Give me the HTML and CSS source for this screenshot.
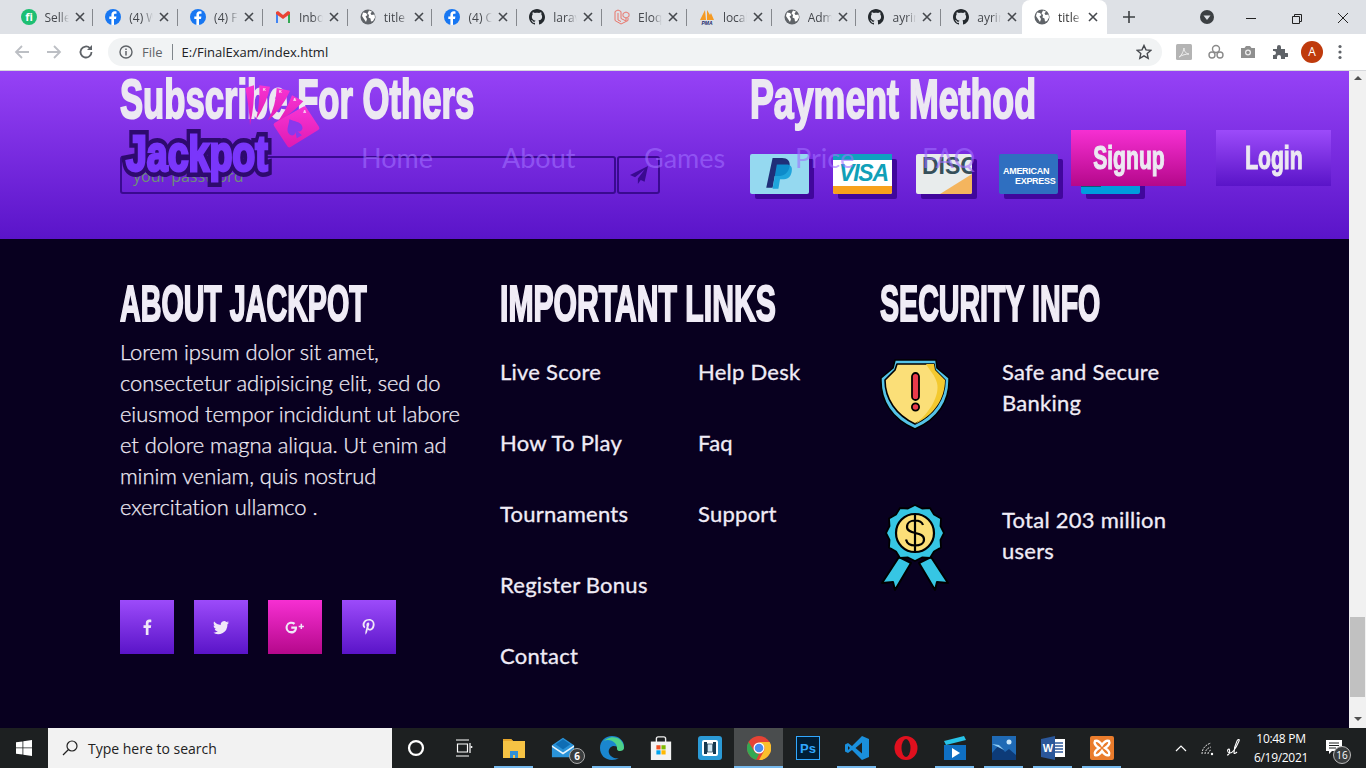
FILE: index.html
```html
<!DOCTYPE html>
<html lang="en">
<head>
<meta charset="utf-8">
<title>title</title>
<link rel="stylesheet" href="styles.css">
</head>
<body>
<svg class="defs" width="0" height="0" aria-hidden="true">
  <symbol id="globe" viewBox="0 0 16 16"><circle cx="8" cy="8" r="7.5" fill="#5f6368"/><path d="M3 3.500l3 .5 1.500 2-2 1.500L7 10l-1 3-2-3-2-3zM9 1.500l3 1-1.500 2 1 1.500 3-.5.500 3-2 3.500-2 .5-.5-3-2-1 .5-2.500-1.500-1.500z" fill="#fff"/></symbol>
  <symbol id="fb" viewBox="0 0 16 16"><circle cx="8" cy="8" r="8" fill="#1877f2"/><path d="M9 16V10h2l.4-2.500H9V6c0-.8.300-1.300 1.400-1.300h1.100V2.500C11 2.400 10.300 2.300 9.700 2.300 7.700 2.300 6.400 3.500 6.400 5.700v1.800H4.300V10h2.100v6z" fill="#fff"/></symbol>
  <symbol id="gh" viewBox="0 0 16 16"><path d="M8 0C3.600 0 0 3.600 0 8c0 3.500 2.300 6.500 5.500 7.600.4.100.5-.2.500-.4v-1.400c-2.200.5-2.700-1-2.700-1-.4-.9-.9-1.200-.9-1.200-.7-.5.100-.5.100-.5.800.1 1.200.8 1.200.8.700 1.200 1.900.9 2.300.7.100-.5.300-.9.500-1.100-1.800-.2-3.600-.9-3.600-4 0-.9.300-1.600.8-2.100-.1-.2-.4-1 .1-2.100 0 0 .7-.2 2.200.8.600-.2 1.300-.3 2-.3s1.400.1 2 .3c1.500-1 2.200-.8 2.200-.8.400 1.100.2 1.900.1 2.100.5.600.8 1.300.8 2.100 0 3.100-1.900 3.700-3.700 3.900.3.300.6.800.6 1.500v2.200c0 .2.100.5.600.4C13.700 14.500 16 11.500 16 8c0-4.400-3.600-8-8-8z" fill="#24292e"/></symbol>
  <symbol id="x" viewBox="0 0 10 10"><path d="M1 1l8 8M9 1l-8 8" stroke="#45484d" stroke-width="1.600" fill="none"/></symbol>
  <linearGradient id="pinkfan" x1="0" y1="0" x2="0" y2="1"><stop offset="0" stop-color="#f733d2"/><stop offset="1" stop-color="#e01cb4"/></linearGradient>
</svg>

<header class="tabstrip">
  <div class="tab"><svg class="tab-ico" viewBox="0 0 16 16"><circle cx="8" cy="8" r="8" fill="#1dbf73"/><text x="8" y="11.500" class="fi-text">fi</text></svg><span class="tab-title">Seller</span><svg class="tab-x"><use href="#x"/></svg></div>
  <div class="tab"><svg class="tab-ico"><use href="#fb"/></svg><span class="tab-title">(4) W</span><svg class="tab-x"><use href="#x"/></svg></div>
  <div class="tab"><svg class="tab-ico"><use href="#fb"/></svg><span class="tab-title">(4) F</span><svg class="tab-x"><use href="#x"/></svg></div>
  <div class="tab"><svg class="tab-ico" viewBox="0 0 16 16"><path d="M1 14V3l2 1v10z" fill="#4285f4"/><path d="M13 14V4l2-1v11z" fill="#34a853"/><path d="M1 3l2-1 5 4 5-4 2 1v2L8 10 1 5z" fill="#ea4335"/></svg><span class="tab-title">Inbox</span><svg class="tab-x"><use href="#x"/></svg></div>
  <div class="tab"><svg class="tab-ico"><use href="#globe"/></svg><span class="tab-title">title</span><svg class="tab-x"><use href="#x"/></svg></div>
  <div class="tab"><svg class="tab-ico"><use href="#fb"/></svg><span class="tab-title">(4) C</span><svg class="tab-x"><use href="#x"/></svg></div>
  <div class="tab"><svg class="tab-ico"><use href="#gh"/></svg><span class="tab-title">larav</span><svg class="tab-x"><use href="#x"/></svg></div>
  <div class="tab"><svg class="tab-ico" viewBox="0 0 16 16"><path d="M1 2.500l3-1.500 3 1.500v7l5 2.500V9l-3-1.500V4.500l3-1.500 3 1.500v3L12 9M1 2.500v9L7 15l7-3.500V9M4 4v7l3 1.500" fill="none" stroke="#e8756b" stroke-width="1"/></svg><span class="tab-title">Eloq</span><svg class="tab-x"><use href="#x"/></svg></div>
  <div class="tab"><svg class="tab-ico" viewBox="0 0 16 16"><path d="M1 11L6 1l1 10zM8 11V1l3 5 1-2 3 7z" fill="#f59a23"/><text x="8" y="15.500" class="pma-text">PMA</text></svg><span class="tab-title">local</span><svg class="tab-x"><use href="#x"/></svg></div>
  <div class="tab"><svg class="tab-ico"><use href="#globe"/></svg><span class="tab-title">Adm</span><svg class="tab-x"><use href="#x"/></svg></div>
  <div class="tab"><svg class="tab-ico"><use href="#gh"/></svg><span class="tab-title">ayrin</span><svg class="tab-x"><use href="#x"/></svg></div>
  <div class="tab tab-last"><svg class="tab-ico"><use href="#gh"/></svg><span class="tab-title">ayrin</span><svg class="tab-x"><use href="#x"/></svg></div>
  <div class="tab tab-active"><svg class="tab-ico"><use href="#globe"/></svg><span class="tab-title">title</span><svg class="tab-x"><use href="#x"/></svg></div>
  <svg class="new-tab" viewBox="0 0 12 12"><path d="M6 0v12M0 6h12" stroke="#3c4043" stroke-width="1.600"/></svg>
  <div class="win-controls">
    <span class="profile-dot"><svg viewBox="0 0 14 14"><circle cx="7" cy="7" r="7" fill="#3c4043"/><path d="M3.500 5.500h7L7 10z" fill="#dee1e6"/></svg></span>
    <svg class="win-btn" viewBox="0 0 46 34"><path d="M18 18.500h10" stroke="#222"/></svg>
    <svg class="win-btn" viewBox="0 0 46 34"><path d="M18.500 16.500h7v7h-7zM20.500 16.500v-2h7v7h-2" fill="none" stroke="#222"/></svg>
    <svg class="win-btn" viewBox="0 0 46 34"><path d="M18 13l10 10M28 13L18 23" stroke="#222"/></svg>
  </div>
</header>

<nav class="toolbar">
  <svg class="tool-ico" viewBox="0 0 16 16"><path d="M15 8H2M8 2L2 8l6 6" fill="none" stroke="#bcbfc4" stroke-width="1.800"/></svg>
  <svg class="tool-ico" viewBox="0 0 16 16"><path d="M1 8h13M8 2l6 6-6 6" fill="none" stroke="#bcbfc4" stroke-width="1.800"/></svg>
  <svg class="tool-ico" viewBox="0 0 16 16"><path d="M13.500 8a5.500 5.500 0 1 1-1.600-3.900" fill="none" stroke="#5f6368" stroke-width="1.800"/><path d="M14 1v5H9z" fill="#5f6368"/></svg>
  <div class="omnibox">
    <svg class="info-ico" viewBox="0 0 14 14"><circle cx="7" cy="7" r="6" fill="none" stroke="#5f6368" stroke-width="1.400"/><path d="M7 6v4.500M7 3.500v1.500" stroke="#5f6368" stroke-width="1.500"/></svg>
    <span class="omni-file">File</span>
    <span class="omni-sep"></span>
    <span class="omni-url">E:/FinalExam/index.html</span>
    <svg class="star" viewBox="0 0 16 16"><path d="M8 1.500l2 4.400 4.800.5-3.600 3.200 1 4.700L8 11.900l-4.200 2.400 1-4.700L1.200 6.400 6 5.900z" fill="none" stroke="#45484d" stroke-width="1.400"/></svg>
  </div>
  <div class="ext-row">
    <svg class="ext" viewBox="0 0 16 16"><rect width="16" height="16" rx="1.500" fill="#b4b4b4"/><path d="M3 13c2-1 4-4 5-9 0 3 2 6 5 6-3 0-7 1-10 3z" fill="none" stroke="#eee" stroke-width="1"/></svg>
    <svg class="ext" viewBox="0 0 16 16"><g fill="none" stroke="#8a8a8a" stroke-width="1.400"><circle cx="4" cy="11" r="3"/><circle cx="12" cy="11" r="3"/><circle cx="8" cy="5" r="3.500"/></g></svg>
    <svg class="ext" viewBox="0 0 16 16"><path d="M1 4h3.500L6 2h4l1.500 2H15v10H1z" fill="#8f8f8f"/><circle cx="8" cy="8.500" r="3" fill="#eee"/><circle cx="8" cy="8.500" r="1.700" fill="#8f8f8f"/></svg>
    <svg class="ext" viewBox="0 0 16 16"><path d="M1 5h4V3a2 2 0 0 1 4 0v2h4v4h2a2 2 0 0 1 0 4h-2v2H9v-2a2 2 0 0 0-4 0v2H1v-4h1a2 2 0 0 0 0-4H1z" fill="#5f6368"/></svg>
    <span class="avatar">A</span>
    <svg class="kebab" viewBox="0 0 4 16"><g fill="#5f6368"><circle cx="2" cy="2.500" r="1.600"/><circle cx="2" cy="8" r="1.600"/><circle cx="2" cy="13.500" r="1.600"/></g></svg>
  </div>
</nav>

<div class="viewport">
  <div class="page">
    <header class="site-header">
      <div class="logo">
        <svg class="logo-cards" viewBox="0 0 270 225">
          <path d="M28 30L54 22Q56 80 42 142Q40 90 28 30Z" fill="url(#pinkfan)"/>
          <path d="M70 22L102 26Q95 70 60 125Q72 80 70 22Z" fill="url(#pinkfan)"/>
          <path d="M122 30L162 38Q140 90 95 128Q120 85 122 30Z" fill="url(#pinkfan)"/>
          <path d="M168 52L202 70Q175 100 118 140Q150 100 168 52Z" fill="url(#pinkfan)"/>
          <path d="M120 140L205 92L243 150L160 201Z" fill="url(#pinkfan)" stroke="url(#pinkfan)" stroke-width="14" stroke-linejoin="round"/>
          <path d="M175 120C185 135 200 142 198 157C196 170 182 170 178 162L184 180H166L172 162C168 170 154 170 152 157C150 142 165 135 175 120Z" transform="rotate(-30 175 150)" fill="#8a38ec"/>
          <text x="85" y="38" class="card-letter">K</text>
          <text x="133" y="44" class="card-letter">K</text>
          <text x="176" y="70" class="card-letter">A</text>
          <text x="206" y="104" class="card-letter">A</text>
        </svg>
        <span class="logo-word" data-text="Jackpot">Jackpot</span>
      </div>
      <ul class="site-nav">
        <li class="nav-home">Home</li>
        <li class="nav-about">About</li>
        <li class="nav-games">Games</li>
        <li class="nav-price">Price</li>
        <li class="nav-faq">FAQ</li>
      </ul>
      <div class="auth">
        <a class="auth-btn auth-pink"><span class="auth-label">Signup</span></a>
        <a class="auth-btn auth-purple"><span class="auth-label">Login</span></a>
      </div>
    </header>

    <section class="band">
      <div class="band-col band-sub">
        <h2 class="band-title">Subscribe For Others</h2>
        <form class="sub-form">
          <div class="sub-input">your password</div>
          <div class="sub-send"><svg viewBox="0 0 16 16"><path d="M16 0L0 8l4.500 2L13 3l-6 8v5l2.500-3.500 3.500 1.500z" fill="#3a0a90"/></svg></div>
        </form>
      </div>
      <div class="band-col band-pay">
        <h2 class="band-title band-title-pay">Payment Method</h2>
        <div class="cards">
          <div class="card card-paypal"><svg viewBox="0 0 30 34"><path d="M8 2h9c5 0 8 3 7 8-1 6-5 9-11 9H10l-2 11H2z" fill="#1f2f78"/><path d="M12 8h9c4 0 6 2 5 7-1 5-4 7-9 7h-2l-1.500 9H8z" fill="#0a9bd8" opacity=".85"/></svg></div>
          <div class="card card-visa"><span class="visa-top"></span><span class="visa-word">VISA</span><span class="visa-bot"></span></div>
          <div class="card card-disc"><span class="disc-word">DISC</span><span class="disc-corner"></span></div>
          <div class="card card-amex"><span class="amex-word">AMERICAN</span><span class="amex-word amex-second">EXPRESS</span></div>
          <div class="card card-fifth"></div>
        </div>
      </div>
    </section>

    <footer class="site-footer">
      <div class="foot-col">
        <h3 class="foot-title foot-title-about">ABOUT JACKPOT</h3>
        <p class="foot-about">Lorem ipsum dolor sit amet, consectetur adipisicing elit, sed do eiusmod tempor incididunt ut labore et dolore magna aliqua. Ut enim ad minim veniam, quis nostrud exercitation ullamco .</p>
        <div class="socials">
          <a class="social"><svg viewBox="0 0 16 16"><path d="M9.500 16V9h2.300l.4-2.800H9.500V4.500c0-.8.200-1.300 1.400-1.300h1.400V.7C12 .7 11.200.6 10.300.6 8.200.6 6.800 1.900 6.800 4.200v2H4.500V9h2.300v7z" fill="#f0e8f8"/></svg></a>
          <a class="social"><svg viewBox="0 0 16 16"><path d="M16 3.500c-.6.300-1.200.4-1.900.5.700-.4 1.200-1 1.400-1.800-.6.400-1.300.7-2.100.8A3.300 3.300 0 0 0 7.800 6C5.100 5.900 2.700 4.600 1.100 2.600.3 4 .7 6 2.100 7c-.5 0-1-.2-1.500-.4 0 1.600 1.100 3 2.600 3.300-.5.100-1 .1-1.500 0 .4 1.300 1.600 2.300 3.100 2.300A6.600 6.600 0 0 1 0 13.600 9.300 9.300 0 0 0 14.400 5.300c.6-.5 1.200-1.100 1.600-1.800z" fill="#f0e8f8"/></svg></a>
          <a class="social social-pink"><svg class="gplus" viewBox="0 0 22 16"><path d="M6.500 7v2.300h3.700c-.3 1.500-1.600 2.500-3.700 2.500a3.900 3.900 0 0 1 0-7.800c1 0 1.900.4 2.600 1l1.700-1.700A6.300 6.300 0 1 0 6.500 14.400c3.700 0 6.100-2.600 6.100-6.200 0-.4 0-.8-.1-1.200zM18 6V4h-1.600v2h-2v1.600h2v2H18v-2h2V6z" fill="#f0e8f8"/></svg></a>
          <a class="social"><svg viewBox="0 0 16 16"><path d="M8.200 0C3.800 0 1.600 3 1.600 5.600c0 1.600.6 3 1.900 3.500.2.100.4 0 .5-.2l.2-.8c.1-.2 0-.3-.1-.5-.4-.4-.6-1-.6-1.800 0-2.300 1.700-4.300 4.500-4.300 2.400 0 3.800 1.500 3.800 3.500 0 2.600-1.200 4.800-2.900 4.800-1 0-1.700-.8-1.400-1.800.3-1.100.8-2.300.8-3.100 0-.7-.4-1.300-1.200-1.300-.9 0-1.700 1-1.700 2.300 0 .8.300 1.400.3 1.400L4.500 12.300c-.3 1.300-.1 2.900 0 3.100 0 .1.100.1.200.1.100-.1 1.100-1.400 1.500-2.700l.6-2.300c.3.600 1.200 1.100 2.100 1.100 2.800 0 4.700-2.600 4.700-6C13.600 2.400 11.400 0 8.200 0z" fill="#f0e8f8"/></svg></a>
        </div>
      </div>
      <div class="foot-col">
        <h3 class="foot-title foot-title-links">IMPORTANT LINKS</h3>
        <div class="foot-links">
          <ul class="link-list link-list-a">
            <li>Live Score</li><li>How To Play</li><li>Tournaments</li><li>Register Bonus</li><li>Contact</li>
          </ul>
          <ul class="link-list">
            <li>Help Desk</li><li>Faq</li><li>Support</li>
          </ul>
        </div>
      </div>
      <div class="foot-col">
        <h3 class="foot-title foot-title-sec">SECURITY INFO</h3>
        <div class="sec-row sec-row-first">
          <svg class="sec-ico" viewBox="0 0 70 72">
            <path d="M15 1H56L57 9L69 19C70 42 58 60 35 70C12 60 0 42 1 19L13 9Z" fill="#55c3e8" stroke="#000" stroke-width="1.600" stroke-linejoin="round"/>
            <path d="M17 5H54L55 11L65 21C65 40 54 56 35 65C16 56 5 40 5 21L15 11Z" fill="#fbdf78" stroke="#000" stroke-width="1.600" stroke-linejoin="round"/>
            <path d="M46 5H54L55 11L65 21C65 40 54 56 35 65C50 54 60 36 57 24C55 16 50 12 46 5Z" fill="#f3c92f"/>
            <rect x="32" y="14" width="7" height="27" rx="3.500" fill="#ea3a4b" stroke="#000" stroke-width="1.800"/>
            <circle cx="35.500" cy="48" r="3.600" fill="#ea3a4b" stroke="#000" stroke-width="1.800"/>
          </svg>
          <p class="sec-text">Safe and Secure Banking</p>
        </div>
        <div class="sec-row">
          <svg class="sec-ico sec-ico-medal" viewBox="0 0 70 88">
            <path d="M19 53L2 79L13 78L15 86L31 59ZM51 53L68 79L57 78L55 86L39 59Z" fill="#36c6e4" stroke="#000" stroke-width="2" stroke-linejoin="round"/>
            <path d="M35 1l7 3.500 8-.5 4 6.500 7 4-.5 7.500 3.500 7-3.500 7 .5 7.500-7 4-4 6.500-8-.5-7 3.500-7-3.500-8 .5-4-6.500-7-4 .5-7.500-3.500-7 3.500-7-.5-7.500 7-4 4-6.500 8 .5z" fill="#36c6e4" stroke="#000" stroke-width="1.800" stroke-linejoin="round"/>
            <circle cx="35" cy="29" r="19" fill="#fbdf78" stroke="#000" stroke-width="2.200"/>
            <path d="M43 21c-1-3-4-4.500-8-4.500s-8 2-8 6.500c0 8 17 4 17 12.500 0 4-4 6-9 6s-8-2-9-6M35 11v36" fill="none" stroke="#000" stroke-width="2.200"/>
          </svg>
          <p class="sec-text">Total 203 million users</p>
        </div>
      </div>
    </footer>
  </div>
  <aside class="scrollbar">
    <span class="arrow-up"></span>
    <span class="thumb"></span>
    <span class="arrow-down"></span>
  </aside>
</div>

<footer class="taskbar">
  <div class="tb-start"><svg viewBox="0 0 16 16"><path d="M0 2.300L6.500 1.400V7.500H0zM7.300 1.300L16 0V7.500H7.300zM0 8.300H6.500V14.600L0 13.700zM7.300 8.300H16V16L7.300 14.700z" fill="#fff"/></svg></div>
  <div class="tb-search"><svg viewBox="0 0 16 16"><circle cx="10" cy="6" r="5" fill="none" stroke="#222" stroke-width="1.200"/><path d="M6.500 9.500L1 15" stroke="#222" stroke-width="1.300"/></svg><span>Type here to search</span></div>
  <div class="tb-cell"><svg class="tb-small" viewBox="0 0 16 16"><circle cx="8" cy="8" r="6.200" fill="none" stroke="#fff" stroke-width="2"/></svg></div>
  <div class="tb-cell"><svg class="tb-small" viewBox="0 0 18 18"><path d="M1 1h13M1 17h13M2.500 5h10v8h-10zM15 4v10" fill="none" stroke="#fff" stroke-width="1.200"/><circle cx="16.500" cy="8" r="1" fill="#fff"/></svg></div>

  <div class="tb-app tb-on"><svg viewBox="0 0 24 24"><path d="M1 3h8l2 2h12v17H1z" fill="#f6c344"/><path d="M1 3h8l2 2H1z" fill="#e6a52a"/><path d="M8 22v-7h8v7h-3v-3h-2v3z" fill="#2f8fd6"/></svg></div>
  <div class="tb-app"><svg viewBox="0 0 26 24"><path d="M1 9L13 1l12 8v13H1z" fill="#2a93d9"/><path d="M1 9l12 8 12-8v2L13 19 1 11z" fill="#e9f5fc"/><path d="M5 8l8-5.500L21 8l-8 5.500z" fill="#0f6db4"/></svg><span class="mail-badge">6</span></div>
  <div class="tb-app tb-on"><svg viewBox="0 0 24 24"><path d="M12 0C5 0 0 5 0 12c0 7 5 12 12 12 3 0 5-1 7-2-4 1-9-1-10-5-1-3 1-6 4-7 4 0 7 2 10 3 1-1 1-2 1-3C24 5 19 0 12 0z" fill="#1a86cf"/><path d="M2 7c3-4 9-7 15-5 4 1 7 6 7 10 0 2-2 3-4 3-3 0-3-2-3-3 0-5-5-8-9-8-3 0-5 1-6 3z" fill="#4ed28a"/></svg></div>
  <div class="tb-app"><svg viewBox="0 0 24 26"><path d="M7 8V3a2 2 0 0 1 2-2h6a2 2 0 0 1 2 2v5" fill="none" stroke="#eee" stroke-width="1.500"/><rect x="1" y="6" width="22" height="20" fill="#f3f3f3"/><rect x="7" y="10" width="4.500" height="4.500" fill="#f25022"/><rect x="12.500" y="10" width="4.500" height="4.500" fill="#7fba00"/><rect x="7" y="15.500" width="4.500" height="4.500" fill="#00a4ef"/><rect x="12.500" y="15.500" width="4.500" height="4.500" fill="#ffb900"/></svg></div>
  <div class="tb-app"><svg viewBox="0 0 24 24"><rect width="24" height="24" rx="3" fill="#2b9ad6"/><rect x="4" y="4" width="16" height="16" rx="2" fill="#fff"/><rect x="6" y="6" width="3" height="12" fill="#17384f"/><rect x="15" y="6" width="3" height="12" fill="#17384f"/><rect x="9.500" y="8" width="5" height="8" fill="#cfe6f2" stroke="#17384f" stroke-width=".7"/></svg></div>
  <div class="tb-app tb-active tb-on"><svg viewBox="0 0 24 24"><circle cx="12" cy="12" r="12" fill="#e54335"/><path d="M12 24A12 12 0 0 1 1.600 6L7 15c1 2 3 3 5 3l-3 6z" fill="#34a853"/><path d="M12 6h10.600A12 12 0 0 1 12 24l5-9c1-2 1-4-.5-6z" fill="#fbc02d"/><circle cx="12" cy="12" r="5.500" fill="#fff"/><circle cx="12" cy="12" r="4.300" fill="#4a8bf0"/></svg></div>
  <div class="tb-app"><svg viewBox="0 0 24 24"><rect x=".5" y=".5" width="23" height="23" fill="#001e36" stroke="#31a8ff"/><text x="12" y="17" class="ps-text">Ps</text></svg></div>
  <div class="tb-app tb-on"><svg viewBox="0 0 24 24"><path d="M17 0l7 3v18l-7 3L7 14l-4 3-3-1.500V8.500L3 7l4 3z" fill="#1a8fdc"/><path d="M17 6.500L10.500 12l6.500 5.500z" fill="#1d2021"/><path d="M3 10l2 2-2 2z" fill="#1d2021"/></svg></div>
  <div class="tb-app"><svg viewBox="0 0 24 24"><ellipse cx="12" cy="12" rx="11.500" ry="12" fill="#e0101e"/><ellipse cx="12" cy="12" rx="4.500" ry="9" fill="#1d2021"/></svg></div>
  <div class="tb-app tb-on"><svg viewBox="0 0 24 24"><path d="M1 9h22v15H1z" fill="#0f6fc2"/><path d="M1 5l20-5 2 4L3 9z" fill="#27c3e8"/><path d="M9 12l8 5-8 5z" fill="#fff"/></svg></div>
  <div class="tb-app tb-on"><svg viewBox="0 0 24 24"><rect width="24" height="24" fill="#1f6ab5"/><path d="M0 24v-7l7-8 6 7 4-3 7 6v5z" fill="#0d3b78"/><path d="M0 8l7 1 5 5" fill="#8ecdf5"/><circle cx="17" cy="6" r="2.500" fill="#cbe8fb"/></svg></div>
  <div class="tb-app tb-on"><svg viewBox="0 0 24 24"><path d="M9 3h15v18H9z" fill="#fff"/><path d="M14 7h8M14 10h8M14 13h8M14 16h8" stroke="#2b579a" stroke-width="1.400"/><path d="M0 3l14-3v24L0 21z" fill="#2b579a"/><text x="7" y="16" class="word-text">W</text></svg></div>
  <div class="tb-app tb-on"><svg viewBox="0 0 24 24"><rect width="24" height="24" rx="2" fill="#ea7c2c"/><path d="M5 5c3-1 5 1 7 4 2-3 4-5 7-4 1 2-1 5-4 7 3 2 5 5 4 7-3 1-5-1-7-4-2 3-4 5-7 4-1-2 1-5 4-7-3-2-5-5-4-7z" fill="none" stroke="#fff" stroke-width="2.400"/></svg></div>

  <div class="tray">
    <svg class="tray-ico" viewBox="0 0 12 8"><path d="M1 7l5-5 5 5" fill="none" stroke="#fff" stroke-width="1.200"/></svg>
    <svg class="tray-wifi" viewBox="0 0 16 16"><path d="M2 14C2 9 5 5 11 3M5 14c0-3 2-6 6-7M8 14c0-2 1-3 3-4" fill="none" stroke="#ddd" stroke-width="1" stroke-dasharray="2 1"/><circle cx="12" cy="14" r="1.200" fill="#fff"/></svg>
    <svg class="tray-pen" viewBox="0 0 16 18"><path d="M1 16c3 0 3-5 2-6-2 0-2 4 1 4s6-5 9-12c1-2-1-2-2 0-2 4-3 8-3 12 0 1 2 0 3-1" fill="none" stroke="#fff" stroke-width="1.100"/></svg>
    <div class="clock"><span>10:48 PM</span><span>6/19/2021</span></div>
    <div class="notify"><svg viewBox="0 0 16 16"><path d="M0 1h16v11H6l-3 3v-3H0z" fill="#fff"/><path d="M3 4h10M3 6.500h10M3 9h7" stroke="#1d2021"/></svg><span class="notify-badge">16</span></div>
  </div>
</footer>
</body>
</html>
```

FILE: styles.css
```css
* { box-sizing: border-box; }
html, body { margin: 0; padding: 0; }
body {
  width: 1366px;
  height: 768px;
  overflow: hidden;
  display: flex;
  flex-direction: column;
  font-family: "Open Sans", "Liberation Sans", sans-serif;
  background: #fff;
}
ul { list-style: none; margin: 0; padding: 0; }
p, h2, h3 { margin: 0; }
.defs { position: absolute; }

/* browser chrome */
.tabstrip {
  height: 34px;
  flex: none;
  background: #dee1e6;
  display: flex;
  align-items: center;
  padding-left: 8.5px;
  font-size: 12px;
  color: #45484d;
}
.tab {
  width: 84.8px;
  height: 34px;
  flex: none;
  display: flex;
  align-items: center;
  padding: 0 8px 0 12px;
  position: relative;
}
.tab::after {
  content: "";
  position: absolute;
  right: 0;
  top: 9px;
  height: 17px;
  width: 1px;
  background: #85888d;
}
.tab-last::after, .tab-active::after { display: none; }
.tab-active {
  background: #fff;
  border-radius: 8px 8px 0 0;
  color: #333;
  margin-left: -4px;
}
.tab-ico { width: 16px; height: 16px; flex: none; }
.tab-title {
  width: 24px;
  margin-left: 8px;
  overflow: hidden;
  white-space: nowrap;
  -webkit-mask-image: linear-gradient(90deg, #000 60%, transparent);
  mask-image: linear-gradient(90deg, #000 60%, transparent);
}
.tab-x { width: 10px; height: 10px; margin-left: 6px; flex: none; }
.fi-text { font: 700 11px "Open Sans", sans-serif; fill: #fff; text-anchor: middle; }
.pma-text { font: italic 700 5px "Liberation Sans", sans-serif; fill: #1a2a6c; text-anchor: middle; }
.new-tab { width: 12px; height: 12px; margin-left: 16px; flex: none; }
.win-controls { display: flex; align-items: center; margin-left: auto; }
.profile-dot { width: 14px; height: 14px; margin-right: 14px; display: block; }
.profile-dot svg { display: block; }
.win-btn { width: 46px; height: 34px; display: block; }

.toolbar {
  height: 37px;
  flex: none;
  background: #fff;
  display: flex;
  align-items: center;
  padding: 0 0 1px 14px;
  gap: 16px;
  border-bottom: 1px solid #d6d8dc;
}
.tool-ico { width: 16px; height: 16px; flex: none; }
.omnibox {
  margin-left: -2px;
  width: 1054px;
  height: 28px;
  border-radius: 14px;
  background: #f1f3f4;
  display: flex;
  align-items: center;
  padding: 0 10px 0 11px;
  font-size: 13px;
}
.info-ico { width: 14px; height: 14px; }
.omni-file { margin-left: 9px; color: #5f6368; }
.omni-sep { width: 1px; height: 16px; background: #80868b; margin: 0 9px 0 9px; }
.omni-url { color: #202124; }
.star { width: 16px; height: 16px; margin-left: auto; }
.ext-row { display: flex; align-items: center; margin-left: -2px; gap: 16px; }
.ext { width: 16px; height: 16px; display: block; }
.avatar {
  width: 22px;
  height: 22px;
  border-radius: 50%;
  background: #bf3a0c;
  color: #fff;
  font-size: 12px;
  text-align: center;
  line-height: 22px;
  margin-left: -3px;
}
.kebab { width: 4px; height: 16px; margin-left: -1px; }

/* page */
.viewport {
  flex: 1;
  min-height: 0;
  display: flex;
}
.page {
  flex: 1;
  min-width: 0;
  position: relative;
  overflow: hidden;
  display: flex;
  flex-direction: column;
  background: #08001f;
}
.scrollbar {
  width: 17px;
  flex: none;
  background: #f1f1f1;
  display: flex;
  flex-direction: column;
  align-items: center;
  padding-top: 5px;
}
.arrow-up { border: 4px solid transparent; border-top: 0; border-bottom: 4px solid #505050; }
.thumb { width: 15px; height: 80px; background: #c1c1c1; margin-top: 537px; }
.arrow-down { border: 4px solid transparent; border-bottom: 0; border-top: 4px solid #505050; margin-top: 20px; }

.band {
  height: 168px;
  flex: none;
  background: linear-gradient(180deg, #9642f6 0%, #5a14c9 100%);
  display: flex;
  padding-left: 120px;
}
.band-col { padding-top: 0; }
.band-sub { width: 630px; }
.band-title {
  font-family: "Liberation Sans", sans-serif;
  font-weight: 700;
  font-size: 55px;
  line-height: 56px;
  color: #ece8f2;
  -webkit-text-stroke: 2px #ece8f2;
  white-space: nowrap;
  width: max-content;
  transform: scaleX(.63);
  transform-origin: left center;
}
.band-title-pay { transform: scaleX(.65); }
.sub-form { display: flex; margin-top: 29px; gap: 1px; }
.sub-input {
  width: 496px;
  height: 38px;
  border: 2px solid #3a0a90;
  border-radius: 3px;
  padding: 5px 11px;
  font-size: 16px;
  line-height: 26px;
  color: #6c8f7a;
}
.sub-send {
  width: 43px;
  height: 38px;
  border: 2px solid #3a0a90;
  border-radius: 3px;
  display: flex;
  align-items: center;
  justify-content: center;
}
.sub-send svg { width: 18px; height: 18px; }
.cards { display: flex; margin-top: 27px; gap: 24px; }
.card {
  width: 59px;
  height: 40px;
  border-radius: 2px;
  box-shadow: 5px 5px 0 #41079c;
  flex: none;
  position: relative;
}
.card-paypal { background: #95d9f0; display: flex; align-items: center; justify-content: center; }
.card-paypal svg { width: 32px; height: 36px; }
.card-visa { background: #fff; }
.visa-top { position: absolute; left: 0; top: 0; right: 0; height: 6px; background: #10a0c0; }
.visa-bot { position: absolute; left: 0; bottom: 0; right: 0; height: 8px; background: #f8a11c; border-radius: 0 0 2px 2px; }
.visa-word {
  position: absolute; left: 6px; top: 6px;
  font: italic 700 23px/26px "Liberation Sans", sans-serif;
  color: #10a0b8;
  letter-spacing: -1.200px;
}
.card-disc { background: #e8ecec; width: 56px; margin-right: 3px; overflow: hidden; }
.disc-word {
  position: absolute; left: 6px; top: -2px;
  font: 700 23px/28px "Liberation Sans", sans-serif;
  color: #36505a;
}
.disc-corner {
  position: absolute; right: 0; bottom: 0;
  width: 0; height: 0;
  border-left: 32px solid transparent;
  border-bottom: 20px solid #f4b55e;
}
.card-amex { background: #2f6fc0; }
.amex-word {
  position: absolute; left: 4px; top: 13px;
  font: 700 9px/9px "Liberation Sans", sans-serif;
  color: #fff;
  letter-spacing: -.3px;
}
.amex-second { left: 16px; top: 23px; }
.card-fifth { background: #009cde; margin-left: -1px; }
.card-fifth::before {
  content: "";
  position: absolute;
  left: 0;
  top: 32px;
  width: 20px;
  height: 1px;
  background: #0b5a78;
}

/* fixed header overlay */
.site-header {
  position: absolute;
  left: 0;
  right: 0;
  top: 0;
  height: 130px;
  z-index: 2;
}
.logo { position: absolute; left: 120px; top: 7px; width: 206px; height: 104px; }
.logo-cards { position: absolute; left: 116px; top: 0; width: 90px; height: 75px; }
.card-letter { font: 700 12px "Liberation Sans", sans-serif; fill: #fbe6f6; text-anchor: middle; }
.logo-word {
  position: absolute;
  left: 6px;
  top: 47px;
  font-family: "Liberation Sans", sans-serif;
  font-weight: 700;
  font-size: 50px;
  line-height: 58px;
  color: #6f2cf5;
  -webkit-text-stroke: 12px #2e0a6e;
  paint-order: stroke fill;
  white-space: nowrap;
  transform: scaleX(.75);
  transform-origin: left center;
}
.logo-word::after {
  content: attr(data-text);
  position: absolute;
  left: 0;
  top: 0;
  color: #7a36fb;
  -webkit-text-stroke: 3px #7a36fb;
}
.site-nav {
  font-family: "Lato", sans-serif;
  font-size: 27px;
  line-height: 32px;
  color: rgba(160, 110, 255, .62);
}
.site-nav li { position: absolute; top: 71px; }
.nav-home { left: 361px; }
.nav-about { left: 502px; }
.nav-games { left: 644px; }
.nav-price { left: 795px; }
.nav-faq { left: 922px; }
.auth { position: absolute; left: 1071px; top: 59px; display: flex; gap: 30px; }
.auth-btn {
  width: 115px;
  height: 56px;
  display: flex;
  align-items: center;
  justify-content: center;
  font-family: "Liberation Sans", sans-serif;
  font-weight: 700;
  font-size: 33px;
  color: #ece8f2;
  -webkit-text-stroke: 1.200px #ece8f2;
}
.auth-label { display: block; transform: scaleX(.64); flex: none; }
.auth-pink { background: linear-gradient(180deg, #f62fd2, #b5088b); }
.auth-purple { background: linear-gradient(180deg, #9c4bfa, #5a14c8); }

/* footer */
.site-footer {
  flex: 1;
  padding: 35px 0 0 120px;
  display: flex;
  color: #f0ecf6;
  font-family: "Lato", sans-serif;
  font-size: 22px;
  line-height: 31px;
}
.foot-col { width: 380px; flex: none; }
.foot-title {
  font-family: "Liberation Sans", sans-serif;
  font-weight: 700;
  font-size: 50px;
  line-height: 60px;
  white-space: nowrap;
  -webkit-text-stroke: 2px #f0ecf6;
  color: #f0ecf6;
  width: max-content;
  transform-origin: left center;
}
.foot-title-about { transform: scaleX(.573); }
.foot-title-links { transform: scaleX(.603); }
.foot-title-sec { transform: scaleX(.572); }
.foot-about {
  width: 350px;
  margin-top: 2px;
  font-weight: 300;
  letter-spacing: -.1px;
  -webkit-text-stroke: .25px #f0ecf6;
}
.socials { display: flex; gap: 20px; margin-top: 78px; }
.social {
  width: 54px;
  height: 54px;
  background: linear-gradient(180deg, #9c4bfa, #5a14c8);
  display: flex;
  align-items: center;
  justify-content: center;
}
.social svg { width: 16px; height: 16px; }
.social .gplus { width: 21px; height: 15px; }
.social-pink { background: linear-gradient(180deg, #f62fd2, #b5088b); }
.foot-links { display: flex; margin-top: 22px; -webkit-text-stroke: .3px #f0ecf6; letter-spacing: .25px; }
.link-list-a { width: 198px; }
.link-list li { margin-bottom: 40px; white-space: nowrap; }
.sec-row { display: flex; }
.sec-row-first { margin-top: 22px; height: 148px; }
.sec-ico { width: 70px; height: 72px; flex: none; margin-top: 3px; }
.sec-ico-medal { height: 88px; margin-top: 0; }
.sec-text { margin-left: 52px; width: 190px; -webkit-text-stroke: .3px #f0ecf6; letter-spacing: .25px; }

/* taskbar */
.taskbar {
  height: 40px;
  flex: none;
  background: #1d2021;
  display: flex;
  align-items: stretch;
}
.tb-start { width: 48px; display: flex; align-items: center; justify-content: center; }
.tb-start svg { width: 16px; height: 16px; }
.tb-search {
  width: 344px;
  background: #f2f2f2;
  display: flex;
  align-items: center;
  padding-left: 14px;
  font-family: "Open Sans", sans-serif;
  font-size: 14px;
  color: #222;
}
.tb-search svg { width: 16px; height: 16px; margin-right: 10px; }
.tb-cell { width: 48px; display: flex; align-items: center; justify-content: center; }
.tb-small { width: 18px; height: 18px; }
.tb-app {
  width: 49px;
  position: relative;
  display: flex;
  align-items: center;
  justify-content: center;
  flex: none;
}
.tb-app:nth-child(5) { margin-left: 1px; }
.tb-app svg { width: 24px; height: 24px; }
.tb-on::after {
  content: "";
  position: absolute;
  left: 5px;
  right: 5px;
  bottom: 0;
  height: 2px;
  background: #76b9ed;
}
.tb-active { background: #4a4d4e; }
.tb-active::after { left: 0; right: 0; }
.ps-text { font: 700 13px "Liberation Sans", sans-serif; fill: #31a8ff; text-anchor: middle; }
.word-text { font: 700 11px "Liberation Sans", sans-serif; fill: #fff; text-anchor: middle; }
.mail-badge {
  position: absolute;
  left: 31px;
  top: 20px;
  width: 16px;
  height: 16px;
  border-radius: 50%;
  background: #3a3d3e;
  border: 1px solid #aaa;
  color: #fff;
  font: 700 10px/14px "Open Sans", sans-serif;
  text-align: center;
}
.tray { margin-left: auto; display: flex; align-items: center; color: #fff; }
.tray-ico { width: 12px; height: 8px; margin-right: 13px; }
.tray-wifi { width: 16px; height: 16px; margin-right: 10px; }
.tray-pen { width: 16px; height: 18px; margin-right: 11px; }
.clock {
  display: flex;
  flex-direction: column;
  align-items: center;
  font-size: 12px;
  line-height: 19px;
  width: 56px;
  letter-spacing: -.3px;
}
.notify { width: 52px; height: 40px; position: relative; margin-left: 5px; }
.notify svg { position: absolute; left: 12px; top: 11px; width: 16px; height: 16px; }
.notify-badge {
  position: absolute;
  left: 19px;
  top: 18px;
  width: 18px;
  height: 18px;
  border-radius: 50%;
  background: #3a3d3e;
  border: 1px solid #bbb;
  font-size: 10px;
  line-height: 16px;
  text-align: center;
}
```
